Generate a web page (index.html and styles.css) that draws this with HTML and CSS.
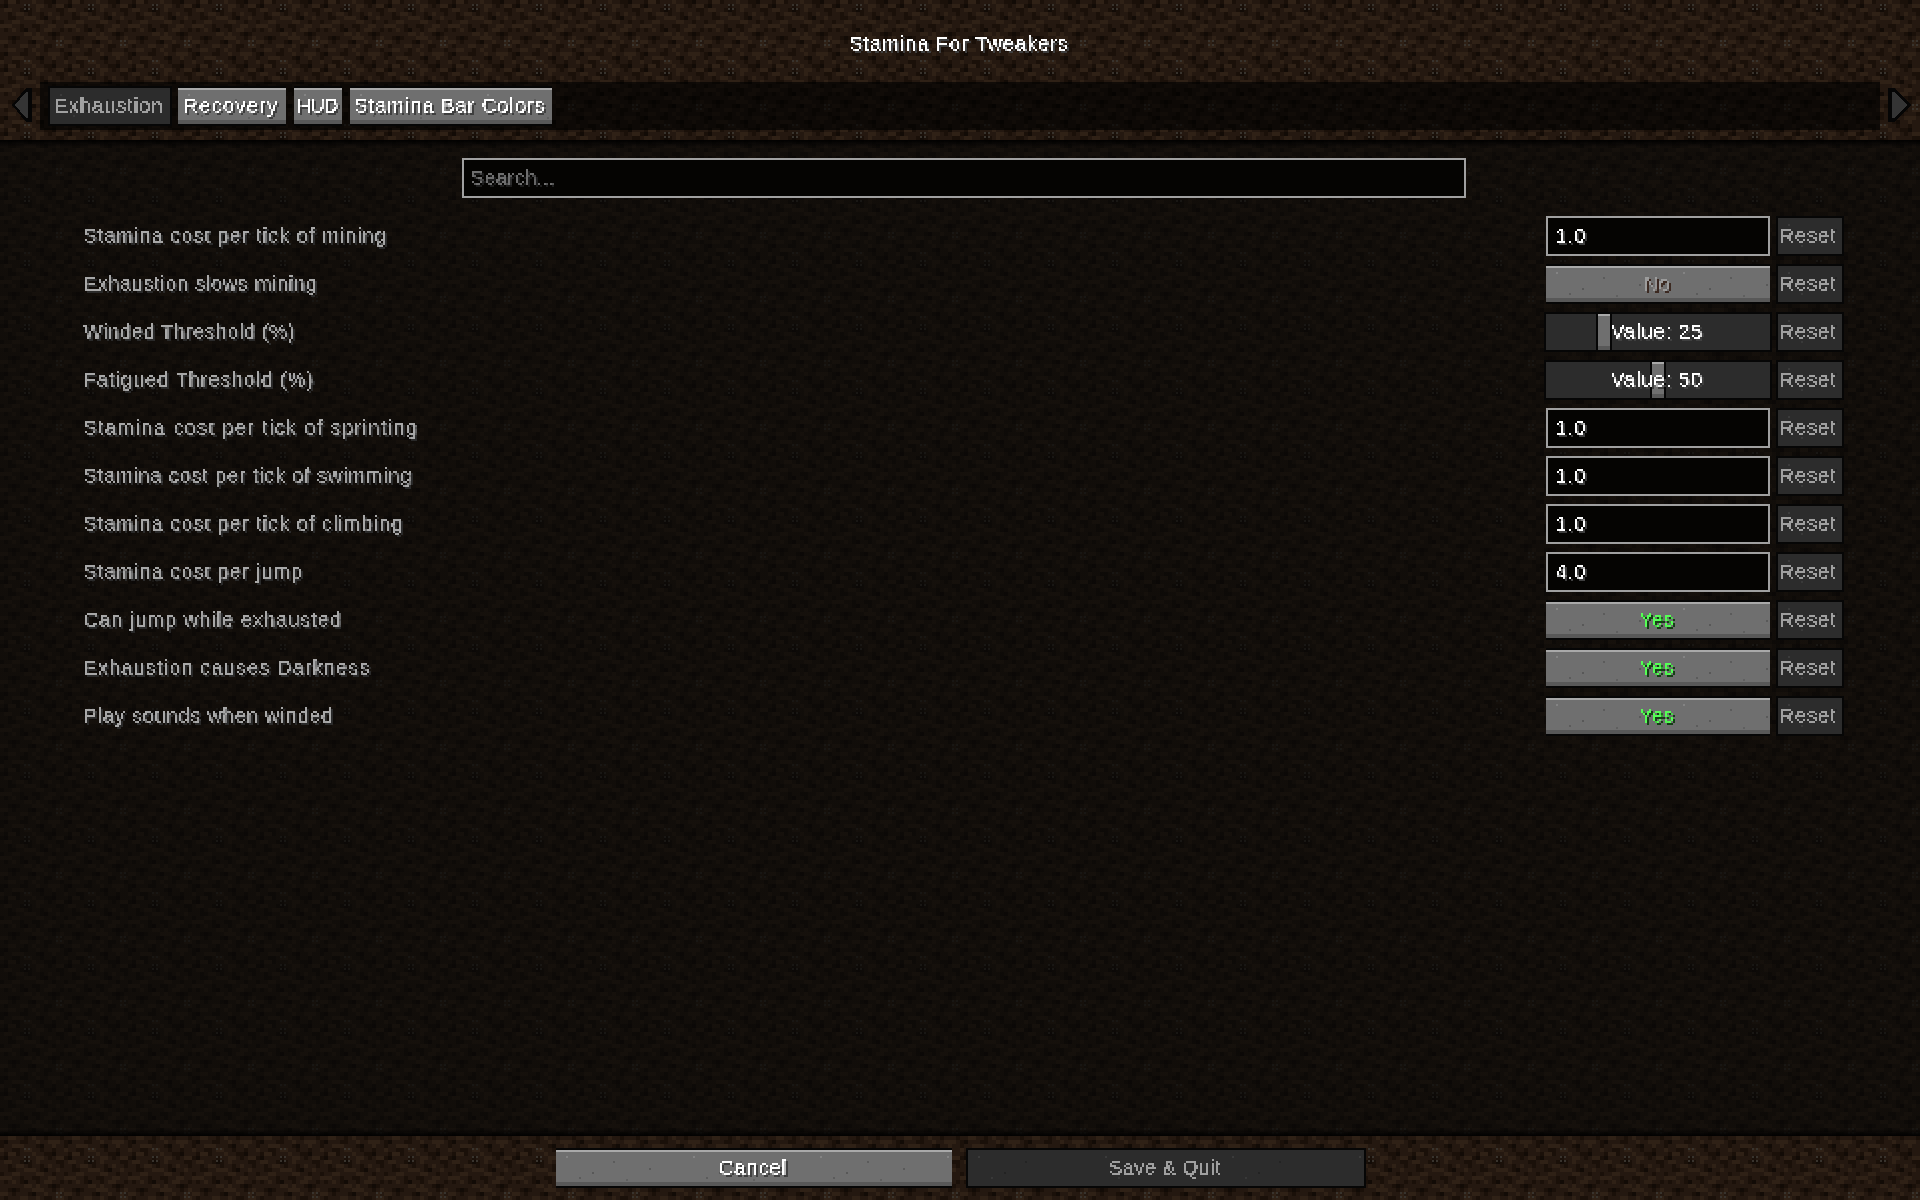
FILE: index.html
```html
<!DOCTYPE html>
<html lang="en">
<head>
<meta charset="utf-8">
<title>Stamina For Tweakers</title>
<link rel="stylesheet" href="styles.css">
</head>
<body>
<svg class="defs" width="1920" height="1200" aria-hidden="true" shape-rendering="crispEdges">
  <defs>
    <pattern id="dirt" width="64" height="64" patternUnits="userSpaceOnUse">
      <rect width="64" height="64" fill="#241810"/>
      <path fill="none" stroke="#1a1009" stroke-width="4" d="M4 2h4M16 2h4M44 2h12M0 6h8M24 6h4M48 6h4M20 10h12M56 10h8M8 14h4M28 14h4M40 14h4M60 14h4M8 18h8M40 18h8M0 22h4M52 22h4M20 26h4M32 26h8M4 30h4M20 30h8M36 30h4M60 30h4M48 34h12M8 38h12M52 38h4M12 42h4M28 42h8M4 46h4M44 46h8M24 50h4M44 50h4M60 50h4M0 54h8M20 54h8M0 58h4M36 58h8M12 62h8M40 62h4M52 62h4"/>
      <path fill="none" stroke="#120b06" stroke-width="4" d="M4 6h4M24 10h4M44 18h4M24 30h4M12 38h4M32 42h4M4 54h4M40 58h4M52 2h4M52 34h4"/>
      <path fill="none" stroke="#2f2116" stroke-width="4" d="M8 2h8M32 2h4M36 6h8M56 6h8M4 10h8M36 10h4M16 14h8M48 14h4M24 18h12M56 18h4M12 22h8M36 22h8M0 26h12M48 26h8M12 30h4M44 30h8M24 34h8M36 34h4M32 38h12M60 38h4M0 42h8M44 42h4M56 42h4M20 46h8M36 46h4M56 46h8M8 50h8M32 50h4M36 54h4M48 54h12M12 58h12M52 58h4M0 62h4M24 62h8"/>
      <path fill="none" stroke="#38332d" stroke-width="2" stroke-dasharray="2 2" d="M24 5h6M24 9h6M56 41h6M56 45h6M24 61h6"/>
    </pattern>
    <filter id="pixel" x="-5%" y="-25%" width="110%" height="150%" color-interpolation-filters="sRGB">
      <feComponentTransfer in="SourceGraphic" result="hard">
        <feFuncA type="discrete" tableValues="0 0 1 1 1 1"/>
      </feComponentTransfer>
      <feFlood x="0" y="0" width="1" height="1" flood-color="#000"/>
      <feComposite width="2" height="2" result="dot"/>
      <feTile in="dot" result="grid"/>
      <feComposite in="hard" in2="grid" operator="in" result="sampled"/>
      <feOffset in="sampled" dx="1" dy="0" result="sx"/>
      <feMerge result="wide">
        <feMergeNode in="sampled"/>
        <feMergeNode in="sx"/>
      </feMerge>
      <feOffset in="wide" dx="0" dy="1" result="sy"/>
      <feMerge>
        <feMergeNode in="wide"/>
        <feMergeNode in="sy"/>
      </feMerge>
    </filter>
  </defs>
  <rect width="1920" height="1200" fill="url(#dirt)"/>
</svg>

<header class="top">
  <h1 class="title"><span class="mc">Stamina For Tweakers</span></h1>
  <nav class="tabstrip">
    <svg class="arrow" width="40" height="48" viewBox="0 0 40 48" aria-hidden="true" shape-rendering="crispEdges">
      <path fill="#050505" d="M12 23 26 6h6v34h-6z"/>
      <path fill="#343434" d="M15 23 26 10h2v26h-2z"/>
    </svg>
    <div class="tabbar">
      <span class="btn off tab"><span class="mc">Exhaustion</span></span>
      <span class="btn tab"><span class="mc sp-14">Recovery</span></span>
      <span class="btn tab"><span class="mc sp-n1">HUD</span></span>
      <span class="btn tab"><span class="mc">Stamina Bar Colors</span></span>
    </div>
    <svg class="arrow" width="40" height="48" viewBox="0 0 40 48" aria-hidden="true" shape-rendering="crispEdges">
      <path fill="#050505" d="M8 6h6l18 17-18 17H8z"/>
      <path fill="#343434" d="M12 10h2l13 13-13 13h-2z"/>
    </svg>
  </nav>
</header>

<main class="list">
  <div class="search"><span class="mc sp-05">Search...</span></div>
  <div class="rows">
    <div class="row"><span class="label mc">Stamina cost per tick of mining</span><div class="ctl"><div class="box"><span class="mc">1.0</span></div><span class="btn off reset"><span class="mc">Reset</span></span></div></div>
    <div class="row"><span class="label mc sp-06">Exhaustion slows mining</span><div class="ctl"><span class="btn wide"><span class="mc no">No</span></span><span class="btn off reset"><span class="mc">Reset</span></span></div></div>
    <div class="row"><span class="label mc sp-06">Winded Threshold (%)</span><div class="ctl"><div class="slider"><i class="thumb" style="left:52px"></i><span class="mc">Value: 25</span></div><span class="btn off reset"><span class="mc">Reset</span></span></div></div>
    <div class="row"><span class="label mc">Fatigued Threshold (%)</span><div class="ctl"><div class="slider"><i class="thumb" style="left:106px"></i><span class="mc">Value: 50</span></div><span class="btn off reset"><span class="mc">Reset</span></span></div></div>
    <div class="row"><span class="label mc sp-14">Stamina cost per tick of sprinting</span><div class="ctl"><div class="box"><span class="mc">1.0</span></div><span class="btn off reset"><span class="mc">Reset</span></span></div></div>
    <div class="row"><span class="label mc sp-08">Stamina cost per tick of swimming</span><div class="ctl"><div class="box"><span class="mc">1.0</span></div><span class="btn off reset"><span class="mc">Reset</span></span></div></div>
    <div class="row"><span class="label mc">Stamina cost per tick of climbing</span><div class="ctl"><div class="box"><span class="mc">1.0</span></div><span class="btn off reset"><span class="mc">Reset</span></span></div></div>
    <div class="row"><span class="label mc">Stamina cost per jump</span><div class="ctl"><div class="box"><span class="mc">4.0</span></div><span class="btn off reset"><span class="mc">Reset</span></span></div></div>
    <div class="row"><span class="label mc">Can jump while exhausted</span><div class="ctl"><span class="btn wide"><span class="mc yes">Yes</span></span><span class="btn off reset"><span class="mc">Reset</span></span></div></div>
    <div class="row"><span class="label mc sp-11">Exhaustion causes Darkness</span><div class="ctl"><span class="btn wide"><span class="mc yes">Yes</span></span><span class="btn off reset"><span class="mc">Reset</span></span></div></div>
    <div class="row"><span class="label mc sp-08">Play sounds when winded</span><div class="ctl"><span class="btn wide"><span class="mc yes">Yes</span></span><span class="btn off reset"><span class="mc">Reset</span></span></div></div>
  </div>
</main>

<footer class="bottom">
  <span class="btn foot"><span class="mc">Cancel</span></span>
  <span class="btn off foot"><span class="mc sp-05">Save &amp; Quit</span></span>
</footer>
</body>
</html>
```
FILE: styles.css
```css
* { box-sizing: border-box; }
html, body { margin: 0; padding: 0; }
body {
  width: 1920px;
  height: 1200px;
  overflow: hidden;
  display: flex;
  flex-direction: column;
  font-family: "Liberation Sans", Arial, sans-serif;
  font-size: 20px;
  color: #fff;
  background: #1c130c;
}
.defs { position: fixed; left: 0; top: 0; z-index: -1; display: block; }

.mc {
  display: inline-block;
  line-height: 24px;
  margin-top: -2px;
  padding-right: 3px;
  letter-spacing: 1px;
  white-space: nowrap;
  text-shadow: 2px 2px 0 #3f3f3f;
  filter: url(#pixel);
}
.mc.sp-n1 { letter-spacing: -1px; }
.mc.sp-05 { letter-spacing: .5px; }
.mc.sp-06 { letter-spacing: .65px; }
.mc.sp-08 { letter-spacing: .8px; }
.mc.sp-11 { letter-spacing: 1.12px; }
.mc.sp-14 { letter-spacing: 1.35px; }

.top { height: 140px; flex: none; }
.title {
  height: 82px;
  margin: 0;
  padding-top: 6px;
  display: flex;
  align-items: center;
  justify-content: center;
  font: inherit;
}
.tabstrip { display: flex; height: 48px; }
.arrow { flex: none; display: block; }
.tabbar {
  flex: 1;
  display: grid;
  grid-template-columns: 120px 108px 48px 202px;
  column-gap: 8px;
  align-items: center;
  justify-content: start;
  padding: 0 10px;
  background: rgba(0, 0, 0, .62);
}

.btn {
  display: flex;
  align-items: center;
  justify-content: center;
  height: 36px;
  background-color: #6f6f6f;
  background-image:
    radial-gradient(circle at 11px 7px, #858585 .7px, transparent .8px),
    radial-gradient(circle at 37px 23px, #565656 .7px, transparent .8px),
    radial-gradient(circle at 58px 12px, #5a5a5a .7px, transparent .8px),
    radial-gradient(circle at 94px 19px, #585858 .7px, transparent .8px),
    radial-gradient(circle at 24px 28px, #5a5a5a .7px, transparent .8px),
    radial-gradient(circle at 71px 30px, #5e5e5e .7px, transparent .8px);
  background-size: 127px 36px;
  box-shadow:
    0 -2px 0 #060606,
    0 2px 0 #060606,
    inset 0 2px 0 #a9a9a9,
    inset 0 -4px 0 #585858;
}
.btn.off {
  background-color: #2c2c2c;
  background-image:
    radial-gradient(circle at 11px 7px, #3c3c3c .7px, transparent .8px),
    radial-gradient(circle at 37px 23px, #222 .7px, transparent .8px),
    radial-gradient(circle at 58px 12px, #232323 .7px, transparent .8px),
    radial-gradient(circle at 24px 28px, #3a3a3a .7px, transparent .8px);
  box-shadow: 0 0 0 2px #060606;
}
.btn.off .mc { color: #a0a0a0; text-shadow: none; }
.reset { padding-right: 2px; }

.list {
  flex: 1;
  padding-top: 18px;
  background:
    linear-gradient(to bottom, rgba(0, 0, 0, .9), transparent 7px),
    linear-gradient(to top, rgba(0, 0, 0, .9), transparent 7px),
    linear-gradient(rgba(8, 8, 7, .66), rgba(8, 8, 7, .66));
}
.search {
  width: 1004px;
  height: 40px;
  margin-left: 462px;
  padding: 0 6px;
  display: flex;
  align-items: center;
  border: 2px solid #a0a0a0;
  background: #050402;
}
.search .mc { color: #6f6f6f; text-shadow: 2px 2px 0 #1c1c1c; }

.rows {
  margin-top: 18px;
  display: flex;
  flex-direction: column;
  gap: 8px;
  padding: 0 78px 0 83px;
}
.row {
  display: flex;
  align-items: center;
  justify-content: space-between;
  height: 40px;
}
.mc.label { color: #a8a8a8; text-shadow: 2px 2px 0 #2a2a2a; }
.ctl {
  display: grid;
  grid-template-columns: 224px 64px;
  column-gap: 8px;
  align-items: center;
}
.box {
  height: 40px;
  padding: 0 7px;
  display: flex;
  align-items: center;
  border: 2px solid #a0a0a0;
  background: #050402;
}
.wide .no { color: #9c9c9c; text-shadow: 2px 2px 0 #3c2a22; }
.wide .yes { color: #55ff55; text-shadow: 2px 2px 0 #153f15; }

.slider {
  position: relative;
  height: 36px;
  display: flex;
  align-items: center;
  justify-content: center;
  background: #2c2c2c;
  box-shadow: 0 0 0 2px #060606;
}
.slider .mc { position: relative; }
.thumb {
  position: absolute;
  top: 0;
  width: 12px;
  height: 36px;
  background: #6f6f6f;
  box-shadow:
    0 0 0 2px #060606,
    inset 0 2px 0 #a9a9a9,
    inset 0 -4px 0 #585858;
}

.bottom {
  flex: none;
  height: 64px;
  padding-top: 14px;
  display: flex;
  justify-content: center;
  column-gap: 16px;
}
.foot { width: 396px; }
```
